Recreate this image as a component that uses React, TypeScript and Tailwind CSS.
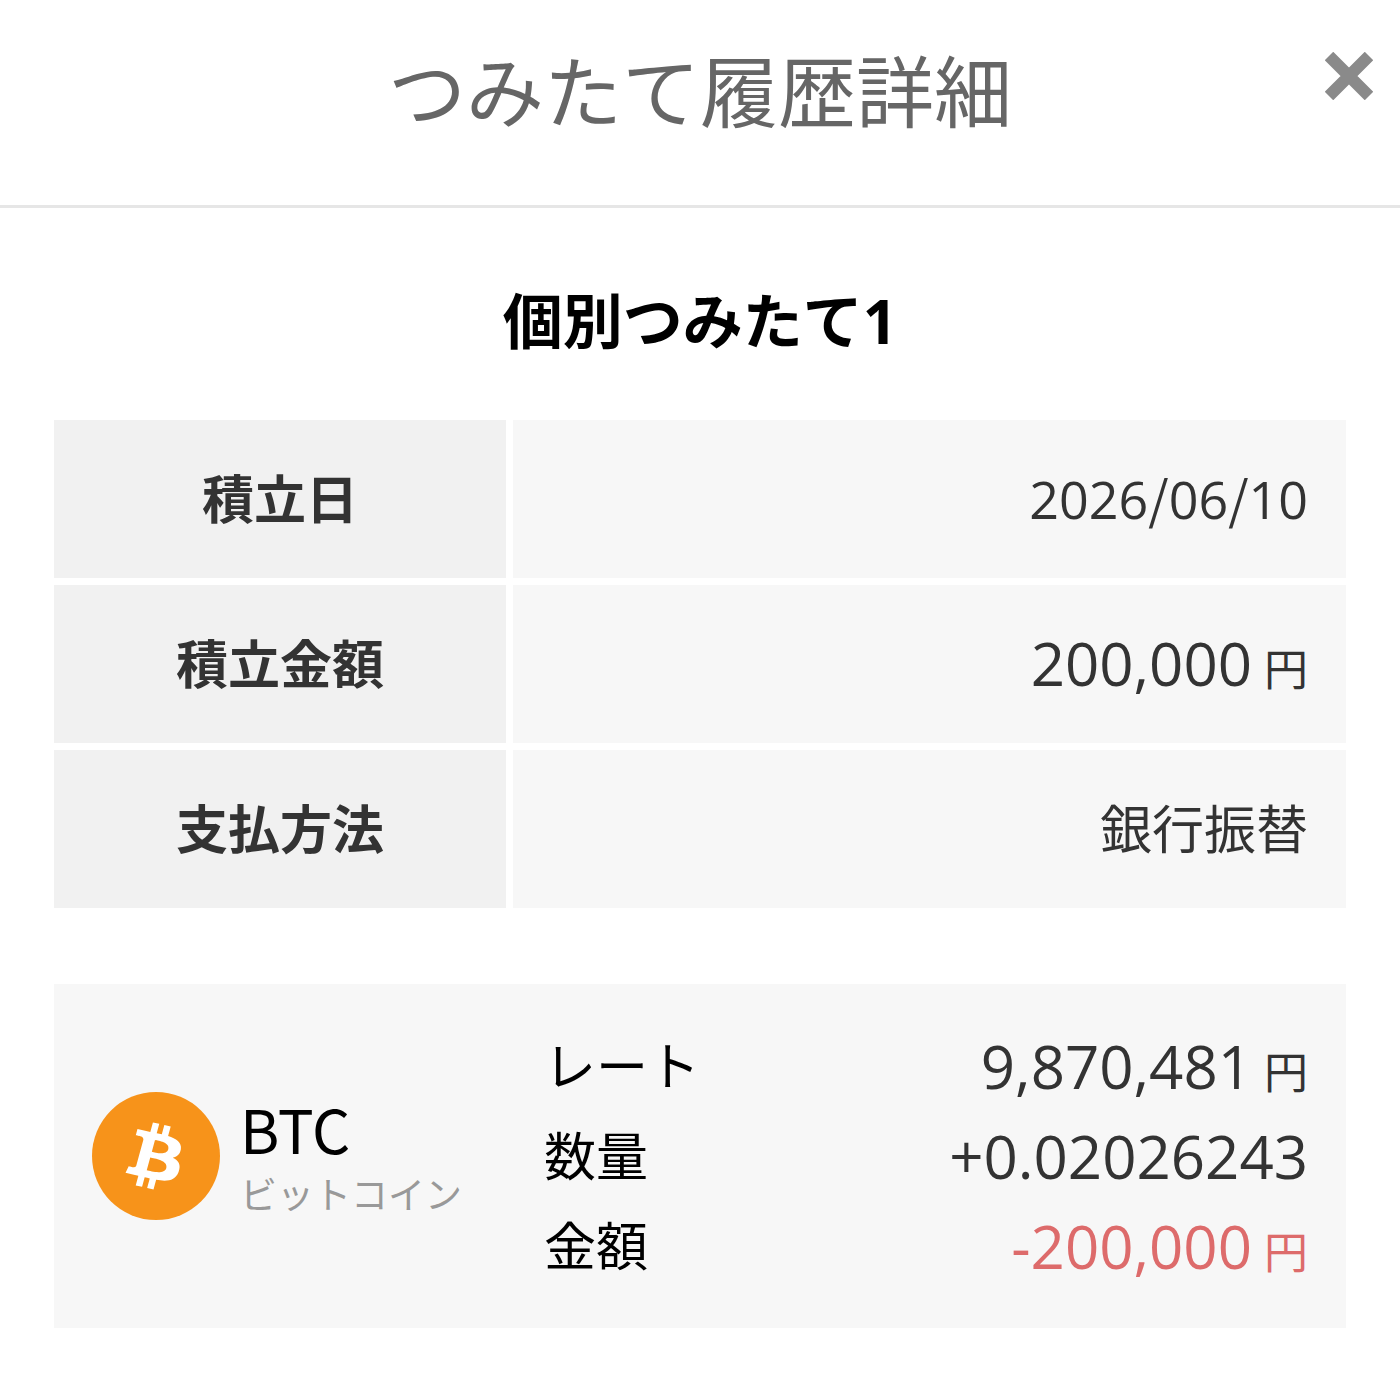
import React from "react";

const details = [
  { label: "積立日", value: "2026/06/10" },
  { label: "積立金額", value: "200,000", unit: "円" },
  { label: "支払方法", value: "銀行振替" },
];

const CloseIcon: React.FC = () => (
  <svg viewBox="0 0 48 48" className="w-12 h-12" aria-hidden="true">
    <path d="M4 4L44 44M44 4L4 44" stroke="#8a8a8a" strokeWidth="12" />
  </svg>
);

const BitcoinIcon: React.FC = () => (
  <svg viewBox="0 0 32 32" className="w-32 h-32 shrink-0" aria-hidden="true">
    <circle cx="16" cy="16" r="16" fill="#f7931a" />
    <path
      transform="translate(15.6 16) scale(0.92 0.84) translate(-16 -16)"
      fill="#fff"
      d="M23.189 14.02c.314-2.096-1.283-3.223-3.465-3.975l.708-2.84-1.728-.43-.69 2.765c-.454-.114-.92-.22-1.385-.326l.695-2.783L15.596 6l-.708 2.839c-.376-.086-.746-.17-1.104-.26l.002-.009-2.384-.595-.46 1.846s1.283.294 1.256.312c.7.175.826.638.805 1.006l-.806 3.235c.048.012.11.03.18.057l-.183-.045-1.13 4.532c-.086.212-.303.531-.793.41.018.025-1.256-.313-1.256-.313l-.858 1.978 2.25.561c.418.105.828.215 1.231.318l-.715 2.872 1.727.43.708-2.84c.472.127.93.245 1.378.357l-.706 2.828 1.728.43.715-2.866c2.948.558 5.164.333 6.097-2.333.752-2.146-.037-3.385-1.588-4.192 1.13-.26 1.98-1.003 2.207-2.538zm-3.95 5.538c-.533 2.147-4.148.986-5.32.695l.95-3.805c1.172.293 4.929.872 4.37 3.11zm.535-5.569c-.487 1.953-3.495.96-4.47.717l.86-3.45c.975.243 4.118.696 3.61 2.733z"
    />
  </svg>
);

const Amount: React.FC<{ value: string; unit?: string }> = ({ value, unit }) => (
  <span className="text-[60px]">
    {value}
    {unit && <span className="ml-3 text-[44px] leading-none">{unit}</span>}
  </span>
);

// Slashes use the Japanese face, digits stay in Open Sans
const PlainValue: React.FC<{ value: string }> = ({ value }) => (
  <>
    {value.split("/").map((part, i) => (
      <React.Fragment key={i}>
        {i > 0 && (
          <span className="font-['Noto_Sans_CJK_JP',sans-serif] leading-none">
            /
          </span>
        )}
        {part}
      </React.Fragment>
    ))}
  </>
);

const App: React.FC = () => {
  return (
    <div className="min-h-screen bg-white font-['Open_Sans','Noto_Sans_CJK_JP',sans-serif] text-[#333]">
      {/* Header */}
      <header className="relative h-[208px] pt-11 border-b-3 border-[#e6e6e6]">
        <h1 className="text-center text-[78px] leading-[96px] text-[#666]">
          つみたて履歴詳細
        </h1>
        <button
          type="button"
          aria-label="閉じる"
          className="absolute top-[52px] right-[27px]"
        >
          <CloseIcon />
        </button>
      </header>

      <main className="px-[47px] pt-[71px]">
        <h2 className="text-center text-[60px] leading-[84px] mb-[50px] font-bold text-black">
          個別つみたて1
        </h2>

        {/* Plan details */}
        <table className="w-full table-fixed border-separate border-spacing-[7px]">
          <tbody>
            {details.map((row) => (
              <tr key={row.label} className="h-[158px]">
                <th
                  scope="row"
                  className="w-[452px] bg-[#f1f1f1] text-[52px] leading-[72px] font-bold"
                >
                  {row.label}
                </th>
                <td className="bg-[#f7f7f7] pr-[38px] text-right text-[52px] leading-[72px]">
                  {row.unit ? (
                    <Amount value={row.value} unit={row.unit} />
                  ) : (
                    <PlainValue value={row.value} />
                  )}
                </td>
              </tr>
            ))}
          </tbody>
        </table>

        {/* Coin */}
        <section className="mx-[7px] mt-[69px] mb-[70px] flex items-center bg-[#f7f7f7] py-[37px] px-[38px]">
          <div className="flex w-[452px] shrink-0 items-center gap-5">
            <BitcoinIcon />
            <div className="text-black">
              <p className="mb-[5px] text-[60px] leading-[72px] font-['Noto_Sans_CJK_JP',sans-serif]">
                BTC
              </p>
              <p className="text-[37px] leading-[52px] text-[#999]">
                ビットコイン
              </p>
            </div>
          </div>
          <dl className="flex-1 text-[60px] leading-[90px]">
            <div className="flex justify-between">
              <dt className="text-[52px] text-black">レート</dt>
              <dd>
                <Amount value="9,870,481" unit="円" />
              </dd>
            </div>
            <div className="flex justify-between">
              <dt className="text-[52px] text-black">数量</dt>
              <dd>
                <Amount value="+0.02026243" />
              </dd>
            </div>
            <div className="flex justify-between">
              <dt className="text-[52px] text-black">金額</dt>
              <dd className="text-[#dd6b6b]">
                <Amount value="-200,000" unit="円" />
              </dd>
            </div>
          </dl>
        </section>
      </main>
    </div>
  );
};

export default App;
